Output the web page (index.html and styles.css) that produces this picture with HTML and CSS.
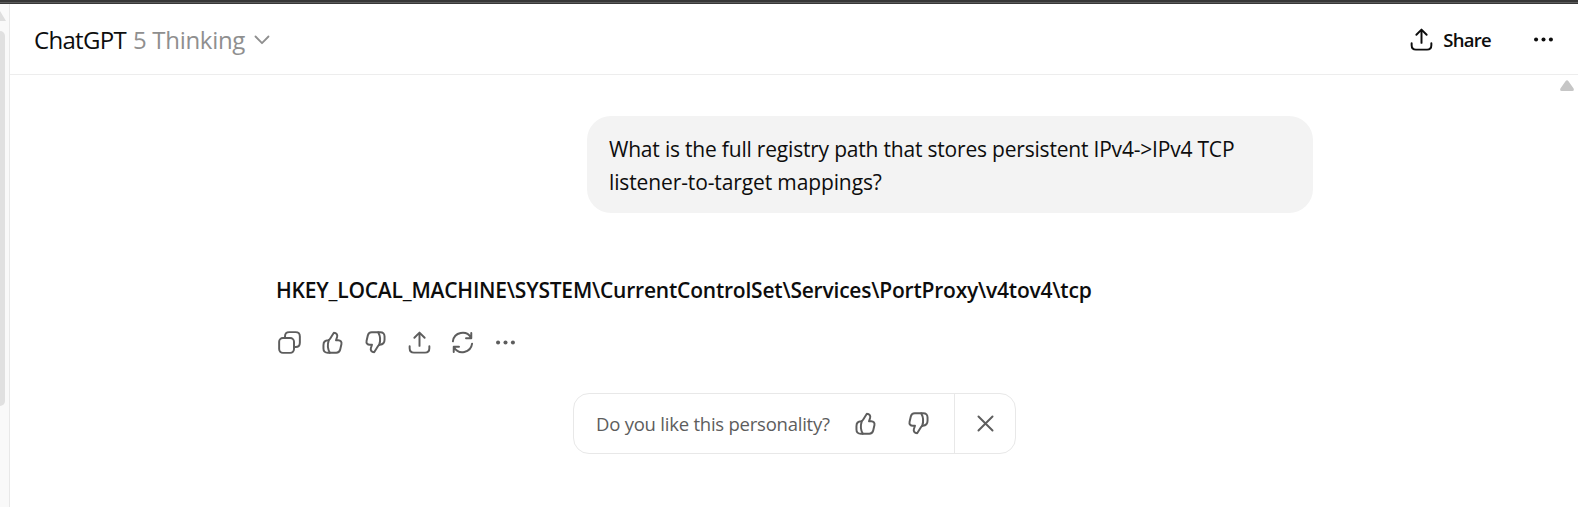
FILE: index.html
```html
<!DOCTYPE html>
<html lang="en">
<head>
<meta charset="utf-8">
<title>ChatGPT</title>
<link rel="stylesheet" href="styles.css">
</head>
<body>
<svg class="defs" aria-hidden="true">
  <symbol id="up" viewBox="0 0 20 20"><path d="M11 2.750c2 .1 2.900 1.700 2.400 3.200l-.8 2.400h1.600c1.900 0 2.800 1.300 2.400 3l-.9 3.900c-.4 1.600-1.300 2.400-2.900 2.400H6.600c-2.300 0-3.300-1.200-3.300-3.200v-2.500c0-2.200 1.100-3.500 3.500-3.600.6-.1 1-.4 1.300-1z"/><path d="M7.200 8.400c-1 3-.8 6.300.8 9.200"/></symbol>
  <symbol id="down" viewBox="0 0 20 20"><use href="#up" transform="rotate(180 10 10)" width="20" height="20"/></symbol>
  <symbol id="share" viewBox="0 0 20 20"><path d="M2.700 12.700v1.600c0 2.200 1 3.200 3.200 3.200h8.200c2.200 0 3.200-1 3.200-3.200v-1.600M10 12.500V3M6.200 6.500 10 2.700l3.800 3.800"/></symbol>
  <symbol id="dots" viewBox="0 0 20 20"><g fill="currentColor" stroke="none"><circle cx="4.500" cy="10" r="1.500"/><circle cx="10" cy="10" r="1.500"/><circle cx="15.500" cy="10" r="1.500"/></g></symbol>
</svg>
<div class="titlebar"></div>
<div class="window">
  <div class="side"><div class="side-arrow"></div><div class="thumb"></div></div>
  <main>
    <header>
      <h1><span class="brand">ChatGPT</span><span class="model">5 Thinking</span><svg class="chev" viewBox="0 0 16 10"><path d="m1.500 1.500 6.500 6.700 6.500-6.700"/></svg></h1>
      <button class="share"><svg class="icon"><use href="#share"/></svg><span>Share</span></button>
      <button class="more"><svg class="icon"><use href="#dots"/></svg></button>
    </header>
    <div class="scroll-arrow"><svg viewBox="0 0 14 11"><path d="M5.500 1.300Q7-.9 8.500 1.300L13.600 8.500Q14.500 11 12.300 11H1.700Q-.5 11 .4 8.500Z"/></svg></div>
    <div class="thread">
      <div class="bubble"><div class="l1">What is the full registry path that stores persistent IPv4-&gt;IPv4 TCP</div><div class="l2">listener-to-target mappings?</div></div>
      <p class="answer">HKEY_LOCAL_MACHINE\SYSTEM\CurrentControlSet\Services\PortProxy\v4tov4\tcp</p>
      <div class="actions">
        <button><svg class="icon" viewBox="0 0 20 20"><rect x="2.330" y="6.670" width="11" height="11" rx="2.800"/><path d="M6.670 6.600V5.500c0-2.200 1-3.170 3.170-3.170h4.660c2.200 0 3.170 1 3.170 3.170v4.660c0 2.200-1 3.170-3.170 3.170h-1.100"/></svg></button>
        <button><svg class="icon"><use href="#up"/></svg></button>
        <button><svg class="icon"><use href="#down"/></svg></button>
        <button><svg class="icon"><use href="#share"/></svg></button>
        <button><svg class="icon" viewBox="0 0 20 20"><path d="M2.900 9.100A7.200 7.200 0 0 1 16.300 6.500M16.500 2.900v3.900h-3.900M17.100 10.900A7.200 7.200 0 0 1 3.700 13.500M3.500 17.100v-3.900h3.900"/></svg></button>
        <button><svg class="icon"><use href="#dots"/></svg></button>
      </div>
    </div>
    <div class="poll">
      <span class="question">Do you like this personality?</span>
      <button><svg class="icon"><use href="#up"/></svg></button>
      <button><svg class="icon"><use href="#down"/></svg></button>
      <button class="close"><svg class="icon" viewBox="0 0 20 20"><path d="m4.800 4.800 10.400 10.400M15.200 4.800 4.800 15.200"/></svg></button>
    </div>
  </main>
</div>
</body>
</html>
```
FILE: styles.css
```css
* { box-sizing: border-box; }
body { margin: 0; height: 507px; overflow: hidden; background: #fff; color: #0d0d0d; font-family: "Open Sans", "Noto Sans", sans-serif; }
button { border: 0; background: none; padding: 0; margin: 0; color: inherit; font: inherit; display: flex; align-items: center; justify-content: center; }
.defs { position: absolute; width: 0; height: 0; }
.icon { width: 27px; height: 27px; display: block; fill: none; stroke: currentColor; stroke-width: 1.45; stroke-linecap: round; stroke-linejoin: round; }
.titlebar { height: 4px; background: linear-gradient(#373737 2px, #5c5c5c 2px, #5c5c5c 3px, #373737 3px); }
.window { height: 503px; display: flex; }
.side { width: 10px; flex: none; background: #f9f9f9; border-right: 1px solid #e8e8e8; overflow: hidden; }
.side-arrow { width: 0; height: 0; margin: 7px 0 10px -6px; border: 6px solid transparent; border-top: 0; border-bottom: 10px solid #dedede; }
.thumb { width: 5px; height: 375px; background: #e0e0e0; border-radius: 0 5px 5px 0; }
main { flex: 1; min-width: 0; display: flex; flex-direction: column; position: relative; }
header { height: 71px; flex: none; border-bottom: 1px solid #ededed; display: flex; align-items: center; padding: 0 21px 0 24px; }
h1 { margin: 0; display: flex; align-items: center; flex: 1; font-size: 24px; line-height: 36px; font-weight: 400; white-space: nowrap; padding-top: 1px; }
.brand { width: 99px; letter-spacing: -.7px; }
.model { width: 121px; color: #8f8f8f; letter-spacing: -.3px; }
.chev { width: 16px; height: 10px; fill: none; stroke: #8f8f8f; stroke-width: 1.8; stroke-linecap: round; stroke-linejoin: round; }
.share { font-size: 18.5px; font-weight: 600; letter-spacing: -.7px; gap: 8px; margin-right: 39px; }
.scroll-arrow { position: absolute; right: 4px; top: 76px; width: 14px; height: 11px; }
.scroll-arrow svg { display: block; width: 14px; height: 11px; fill: #c6c6c6; }
.thread { width: 1037px; margin: 41px 0 0 266px; display: flex; flex-direction: column; }
.bubble { width: 726px; height: 97px; align-self: flex-end; background: #f3f3f3; border-radius: 24px; padding: 17px 22px 0; font-size: 21px; line-height: 33px; white-space: nowrap; }
.l1 { letter-spacing: -.2px; }
.l2 { letter-spacing: -.12px; }
.answer { margin: 61px 0 0; font-size: 21px; line-height: 33px; font-weight: 600; white-space: nowrap; letter-spacing: -.21px; }
.actions { display: flex; color: #5d5d5d; margin: 14px 0 0 -8px; }
.actions button { width: 43.2px; height: 43.2px; }
.poll { width: 443px; height: 61px; margin: 29px 0 0 563px; border: 1px solid #e8e8e8; border-radius: 16px; display: flex; align-items: center; color: #5d5d5d; padding-left: 22px; }
.question { width: 243px; font-size: 18.500px; line-height: 27px; white-space: nowrap; letter-spacing: -.23px; }
.poll button { width: 53px; height: 59px; }
.poll .close { width: 61px; border-left: 1px solid #e8e8e8; margin-left: auto; }
```
